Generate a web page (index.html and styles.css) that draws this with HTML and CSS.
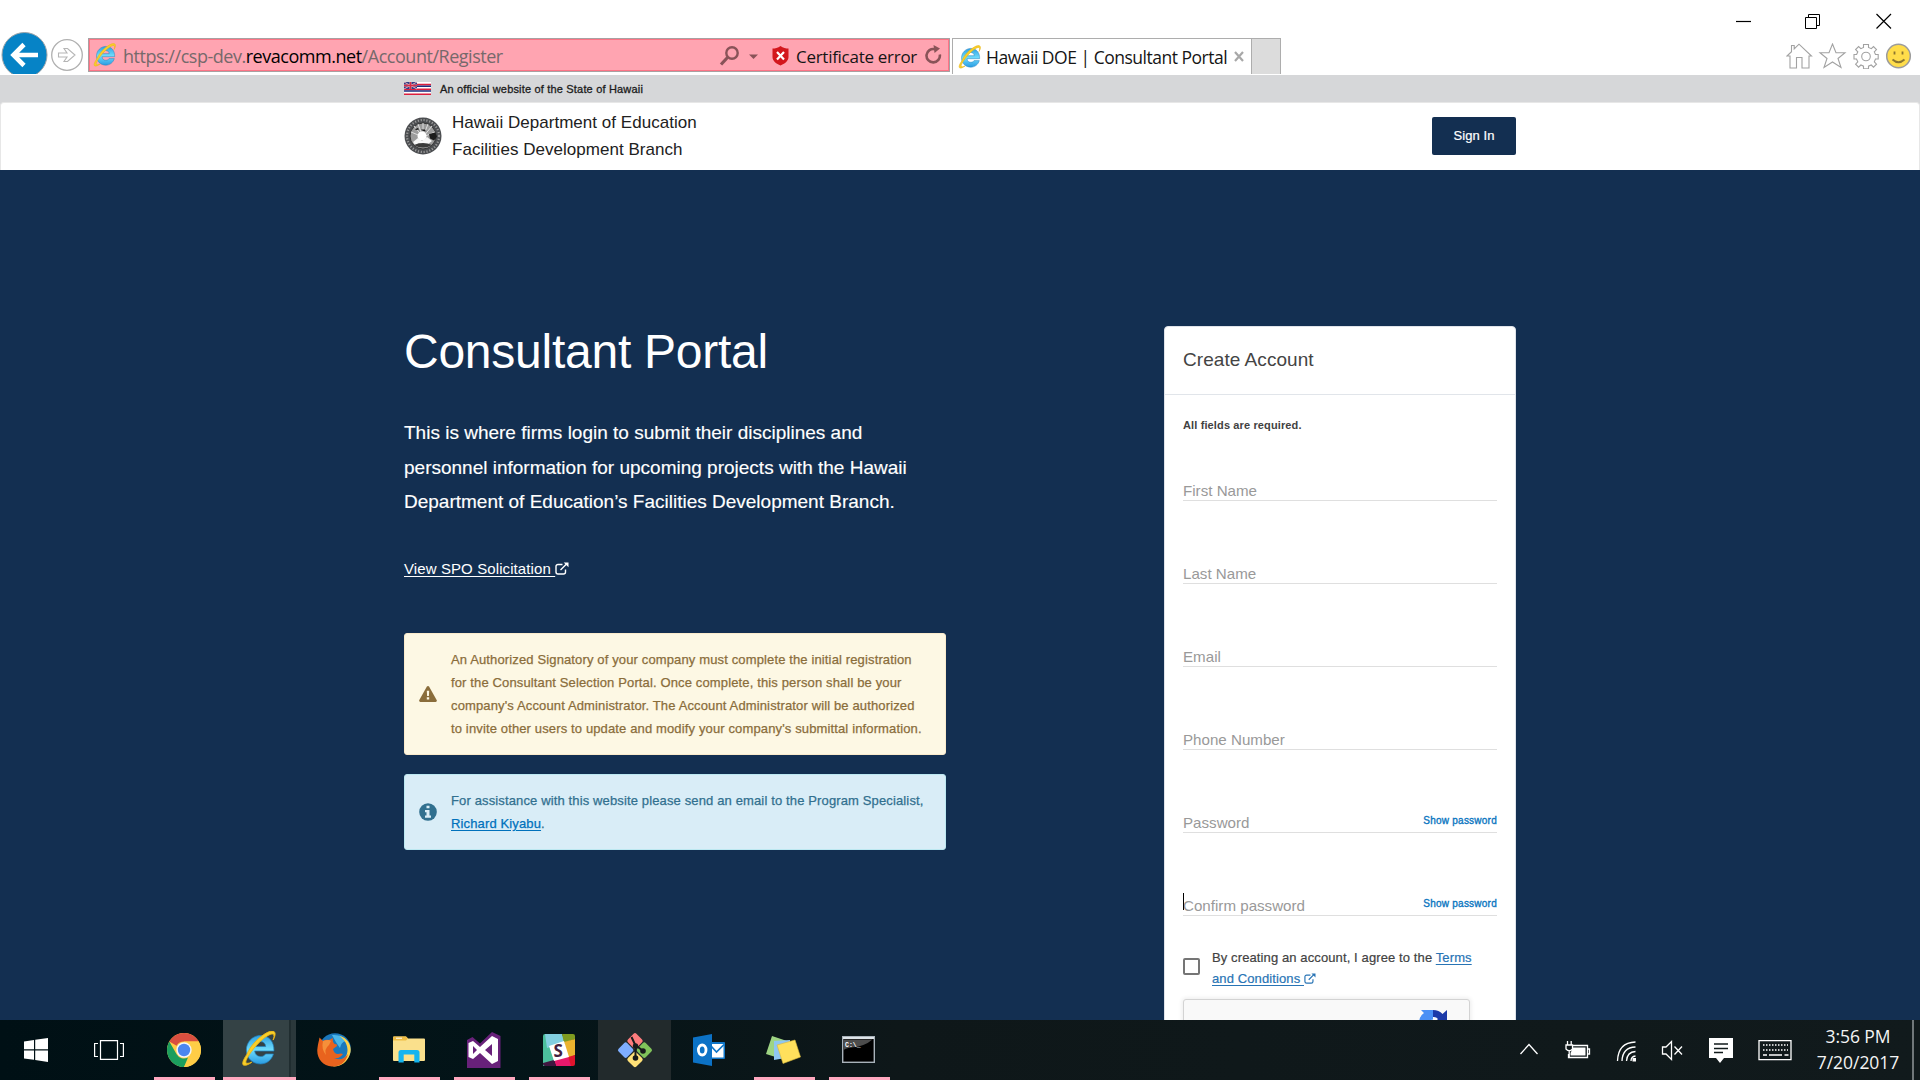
FILE: index.html
```
<!DOCTYPE html>
<html lang="en">
<head>
<meta charset="utf-8">
<title>Hawaii DOE | Consultant Portal</title>
<link rel="stylesheet" href="styles.css">
</head>
<body>
<svg class="defs" width="0" height="0">
  <defs>
    <linearGradient id="ieBlue" x1="0" y1="0" x2="0" y2="1"><stop offset="0" stop-color="#2f9fe0"/><stop offset=".5" stop-color="#6fdcfc"/><stop offset="1" stop-color="#2a9ce2"/></linearGradient>
    <symbol id="ie" viewBox="0 0 34 34">
      <path d="M32 19.5H13.3c.3 3.500 2.800 5.300 5.700 5.300 2.500 0 4-1 4.800-2.500h7.700C29.800 28.200 25 32 19 32 11.200 32 5.200 26.400 5.200 18.500S11.400 4.300 19 4.300c8 0 13.400 5.900 13 15.200zM13.400 15H24c-.3-3-2.300-4.700-5.200-4.700s-5 1.800-5.400 4.700z" fill="url(#ieBlue)" stroke="#2180be" stroke-width=".7"/>
      <path d="M5.500 23C1.500 29 .4 33 3.200 33.300c2 .2 4.600-1 7.300-3-3 1.300-5.200 1.500-5.700.5C4 29 8 22 14.500 14.500S28.600 2 31 3c1.500.7 1.300 3 .2 5.800 2-3.800 2.700-7 .9-8.200C28.800-1.500 21 3.300 13.700 10.600 10 14.300 7.500 18.600 5.500 23z" fill="#f9cf2a" stroke="#e9b618" stroke-width=".9"/>
    </symbol>
    <symbol id="external" viewBox="0 0 14 13">
      <path d="M7.500 2.500H3A2 2 0 0 0 1 4.500V10a2 2 0 0 0 2 2h5.500a2 2 0 0 0 2-2V7.500M5.500 8 11.500 2" fill="none" stroke="currentColor" stroke-width="1.400"/>
      <path d="M8.700.5H13.500V5.300z" fill="currentColor"/>
    </symbol>
  </defs>
</svg>

<header class="browser">
  <svg class="nav-buttons" width="88" height="42" viewBox="0 0 88 42">
    <circle cx="24.500" cy="23" r="22.500" fill="#0683c6" stroke="#9aa3a8"/>
    <path d="M38 23H15M24 12.500 13.500 23 24 33.500" fill="none" stroke="#fff" stroke-width="4.600"/>
    <circle cx="67" cy="23" r="15.300" fill="#fff" stroke="#b0b0b0" stroke-width="1.300"/>
    <path d="M58.500 21H67l-3-4.500h3.500L75 23l-7.500 6.500H64L67 25H58.500z" fill="#fff" stroke="#b5b5b5" stroke-width="1.100"/>
  </svg>
  <div class="address">
    <svg class="addr-ie" width="23" height="24"><use href="#ie"/></svg>
    <span class="url">https://csp-dev.<b>revacomm.net</b>/Account/Register</span>
    <svg width="40" height="24" viewBox="0 0 40 24"><circle cx="13" cy="9" r="5.700" fill="none" stroke="#895358" stroke-width="2.400"/><path d="M8.500 13.500 2 20.500" stroke="#895358" stroke-width="3.200"/><path d="M30 10.500H39L34.500 15z" fill="#895358"/></svg>
    <svg class="shield" width="17" height="20" viewBox="0 0 17 20"><path d="M8.500 0C11 2 14 2.500 16.500 2.500V11c0 4-4 7-8 8.500C4.500 18 .5 15 .5 11V2.500C3 2.500 6 2 8.500 0z" fill="#d3171d"/><path d="M5 6l7 7.500M12 6l-7 7.500" stroke="#fff" stroke-width="2.200"/></svg>
    <span class="cert">Certificate error</span>
    <svg class="reload" width="17" height="20" viewBox="0 0 17 20"><path d="M14.800 9.500A6.700 6.700 0 1 1 10 4.200" fill="none" stroke="#895358" stroke-width="2.600"/><path d="M8.500 0 15 3.500 9.500 8z" fill="#895358"/></svg>
  </div>
  <div class="tab">
    <svg width="23" height="24"><use href="#ie"/></svg>
    <span class="tab-title">Hawaii DOE | Consultant Portal</span>
    <svg class="tab-x" width="10" height="11" viewBox="0 0 10 11"><path d="M1 1l8 9M9 1l-8 9" stroke="#a8a8a8" stroke-width="2.200"/></svg>
  </div>
  <div class="new-tab"></div>
  <div class="window-tools">
    <svg width="156" height="17" viewBox="0 0 156 17" fill="none" stroke="#000"><path d="M0 8.500H15" stroke-width="1.200"/><path d="M69.500 4.500h11v11h-11zM72.500 4V1.500h11v11H81"/><path d="M140.500 1l14.500 14.500M155 1l-14.500 14.500" stroke-width="1.200"/></svg>
    <svg width="126" height="26" viewBox="0 0 126 26" fill="none" stroke="#a2a2a2" stroke-width="1.100">
      <path d="M1 13 5.500 8.700V2.500h2.700V6L13 1.200 25.500 13H23V25H16V14.500H10.500V25H4V13z"/>
      <path d="M46.500 1 50 9.700h9l-7 5.800 3 9-8.500-5.500L38 24.500l3-9-7-5.800h9z"/>
      <path d="M77.500 1.500h5v3l2.800 1.200 2.200-2.200 3 3-2.200 2.400 1.200 2.600h2.700v4.500h-2.700l-1.200 2.900 2.200 2.300-3 3-2.300-2.200-2.700 1.200v2.500h-5v-2.500l-2.600-1.200-2.300 2.200-3-3 2.200-2.300L70.500 16H68v-4.500h2.600l1.200-2.700-2.200-2.300 3-3 2.300 2.200 2.600-1.200z"/><circle cx="80" cy="13.500" r="4.300"/>
      <circle cx="112.500" cy="13" r="11.800" fill="#ffdd4a" stroke="#9c9c9c" stroke-width="1.500"/><path d="M108.500 8.500v3M116.500 8.500v3" stroke="#8b7630" stroke-width="1.800"/><path d="M106.500 16.500q6 5.500 12 0" stroke="#8b7630" stroke-width="1.800"/>
    </svg>
  </div>
</header>

<div class="gov-bar"><div class="wrap gov-inner">
  <svg width="27" height="13" viewBox="0 0 27 13"><path fill="#fff" d="M0 0h27v13H0z"/><path d="M0 2.600h27M0 7.400h27M0 12.200h27" stroke="#dc1f3e" stroke-width="1.600"/><path d="M0 4.200h27M0 9h27" stroke="#1b2f80" stroke-width="1.600"/><path fill="#2b3f88" d="M0 0h13v7H0z"/><path d="M0 0l13 7M13 0 0 7" stroke="#e9b0ba" stroke-width="1"/><path d="M6.500 0v7M0 3.500h13" stroke="#e8a5b0" stroke-width="2"/><path d="M6.500 0v7M0 3.500h13" stroke="#d52d48" stroke-width="1.300"/></svg>
  <span>An official website of the State of Hawaii</span>
</div></div>

<div class="site-header"><div class="wrap header-inner">
  <svg class="seal" width="38" height="38" viewBox="0 0 38 38">
    <circle cx="19" cy="19" r="18.500" fill="#4b4d50"/><circle cx="19" cy="19" r="16" fill="none" stroke="#9a9a9a" stroke-width="2.200" stroke-dasharray="1.200 1.700"/><circle cx="19" cy="19" r="13" fill="#9c9c9c" stroke="#333"/>
    <path d="M19 20V6M19 20 10 9M19 20 28 9M19 20 7 15M19 20 31 15M19 20 14 7M19 20 24 7" stroke="#ddd" stroke-width="1"/>
    <path d="M11 12l3-1 1 1.500-3 .500zM17 12.500h4l1 2-3-.500zM25 17l6-1.500 2 4-3 4-4-2z" fill="#1c1c1c"/>
    <circle cx="18" cy="19" r="4.500" fill="#fff"/><path d="M9 25l5-4 4 3 5-4 5 4-5 4-8-2-4 2z" fill="#f7f7f7"/><path d="M10 28q9-4 18 0-9 5-18 0z" fill="#3a3a3a"/>
  </svg>
  <div class="org"><div>Hawaii Department of Education</div><div>Facilities Development Branch</div></div>
  <a class="sign-in">Sign In</a>
</div></div>

<main class="hero"><div class="wrap hero-inner">
  <section class="intro">
    <h1>Consultant Portal</h1>
    <p class="lead">This is where firms login to submit their disciplines and<br>personnel information for upcoming projects with the Hawaii<br>Department of Education’s Facilities Development Branch.</p>
    <a class="spo"><u>View SPO Solicitation </u><svg width="14" height="13"><use href="#external"/></svg></a>
    <div class="alert warning">
      <svg width="18" height="16" viewBox="0 0 18 16"><path d="M9 0q.8 0 1.200.7l7.600 13.500q.3 1.500-1.100 1.700H1.300Q-.1 15.700.2 14.200L7.800.7Q8.200 0 9 0z" fill="#8a6d3b"/><path d="M7.800 4.800h2.400l-.3 5.200H8.100zM7.800 11.300h2.400v2.300H7.800z" fill="#fdf8e4"/></svg>
      <p>An Authorized Signatory of your company must complete the initial registration<br>for the Consultant Selection Portal. Once complete, this person shall be your<br>company's Account Administrator. The Account Administrator will be authorized<br>to invite other users to update and modify your company's submittal information.</p>
    </div>
    <div class="alert info">
      <svg width="18" height="18" viewBox="0 0 18 18"><circle cx="9" cy="9" r="8.800" fill="#31708f"/><path d="M7.500 2.700h3v2.500h-3zM6 7h4.500v5.500H12v2.200H6v-2.200h1.500V9.200H6z" fill="#d9edf7"/></svg>
      <p>For assistance with this website please send an email to the Program Specialist,<br><a>Richard Kiyabu</a>.</p>
    </div>
  </section>

  <section class="card">
    <h2>Create Account</h2>
    <form class="form">
      <p class="required">All fields are required.</p>
      <div class="field"><label>First Name</label></div>
      <div class="field"><label>Last Name</label></div>
      <div class="field"><label>Email</label></div>
      <div class="field"><label>Phone Number</label></div>
      <div class="field"><label>Password</label><a>Show password</a></div>
      <div class="field focused"><label>Confirm password</label><a>Show password</a></div>
      <div class="terms"><span class="checkbox"></span><p>By creating an account, I agree to the <a>Terms<br>and Conditions </a><svg width="12" height="11"><use href="#external"/></svg></p></div>
      <div class="captcha"><svg width="32" height="32" viewBox="0 0 32 32"><path d="M16 2v9.500q-4.500.5-5 4.500H2Q2 8 7 5L4 2z" fill="#4a90f5"/><path d="M16 2q6 0 9.500 4L30 2v13H17l4-4q-2-2.500-5-2z" fill="#1c3aa9"/><path d="M2 16h8l-2 2q3 7 9 4l6 4Q10 35 4 23z" fill="#ababab"/></svg></div>
    </form>
  </section>
</div></main>

<footer class="taskbar">
  <div class="task start"><svg width="24" height="24" viewBox="0 0 24 24" fill="#fff"><path d="M0 3.400 10 2v9.300H0zM11.200 1.800 24 0v11.300H11.200zM0 12.500h10v9.300L0 20.500zM11.200 12.500H24V24l-12.800-1.900z"/></svg></div>
  <div class="task"><svg width="30" height="20" viewBox="0 0 30 20" fill="none" stroke="#fff" stroke-width="1.200"><path d="M6.500.6h17v18.800h-17zM4 3.500H.6v13H4M26 3.500h3.400v13H26"/></svg></div>
  <div class="task open"><svg width="34" height="34" viewBox="0 0 34 34"><circle cx="17" cy="17" r="17" fill="#ffcd46"/><path d="M2.300 8.500A17 17 0 0 1 31.700 8.500H17a8.500 8.500 0 0 0-7.400 4.200z" fill="#d94f40"/><path d="M2.300 8.500 9.600 21.200A8.500 8.500 0 0 0 21 24.500L17 34A17 17 0 0 1 2.300 8.500z" fill="#1b9e5d"/><path d="M31.700 8.500H17v1.500l7.400 11.200L17 34A17 17 0 0 0 31.700 8.500z" fill="#ffcd46"/><circle cx="17" cy="17" r="7.700" fill="#f5f5f5"/><circle cx="17" cy="17" r="6.200" fill="#4a86f0"/></svg></div>
  <div class="task open active"><svg width="35" height="35"><use href="#ie"/></svg></div>
  <div class="task"><svg width="34" height="34" viewBox="0 0 34 34"><circle cx="18" cy="16" r="15.800" fill="#1a78bd"/><path d="M15 2q10-1 14 6-5 1-6 7-4-5-8-13z" fill="#4bb6e8"/><path d="M22 2.500C33 6 35 15 33 21c-3 9-10 13-17 12.500l12-9c4-5 4-15-6-22z" fill="#ffd24a"/><path d="M2.500 4.500 6 8q3-2 6-1l4-2q-1 4 1.500 6 3 0 2.500 2l-4 3q1 5 5 5 3-1 5 0-3 5-9 4 8 4 14-4C29 30 22 34 15 33.500 5 33-1 24 .5 15 1 10 2 8 2.500 4.500z" fill="#e9631e"/><path d="M6 8q6-2 8 0l-2 4q-5 4-3 10-5-6-3-14z" fill="#f6903a"/></svg></div>
  <div class="task open"><svg width="32" height="27" viewBox="0 0 32 27"><path d="M0 1.500Q0 .5 1 .5H13l2 2H31q1 0 1 1V24q0 1-1 1H1q-1 0-1-1z" fill="#fae08c"/><path d="M0 1.500Q0 .5 1 .5H13l2 2-2 2H0z" fill="#eebd45"/><path d="M3 1.700h6v1H3z" fill="#fff"/><path d="M5.500 26.500v-10q0-2.500 2.500-2.500h16q2.500 0 2.500 2.500v10h-5.200V18.500H10.700v8z" fill="#14b4f0"/></svg></div>
  <div class="task open"><svg width="36" height="36" viewBox="0 0 36 36"><path d="M1 8 6.500 5 14 11.500 26 0l8.500 4V36H1z" fill="#68217a"/><path d="M2.500 11 7 9l7 6L26 4l6 3v22l-6 3-12-11-7 6-4.500-2zM7 14v8l4-4zM26 12l-7 6 7 6z" fill="#fff" fill-rule="evenodd"/></svg></div>
  <div class="task open"><svg width="32" height="32" viewBox="0 0 32 32"><path fill="#4bbf9c" d="M2 0h9v32H0V2q0-2 2-2z"/><path fill="#82cfe0" d="M2 0h17l3 8-18 6z"/><path fill="#7f9b20" d="M19 0h11q2 0 2 2v3l-11 4z"/><path fill="#ecb32e" d="M21 8l11-3v16l-7 4z"/><path fill="#e0142c" d="M25 23l7-2v9q0 2-2 2h-4z"/><path fill="#e8186c" d="M11 26l14-4 3 10H13z"/><path fill="#401640" d="M0 29l11-3 2 6H2q-2 0-2-2z"/><path fill="#fff" d="M6 12l15-5 5 16-15 4z"/><text class="slack-s" x="10.500" y="22.500">S</text></svg></div>
  <div class="task hover"><svg width="36" height="36" viewBox="0 0 36 36"><g transform="rotate(45 18 18)"><rect x="5.500" y="5.500" width="12" height="12" rx="2" fill="#fd7c7d"/><rect x="18.700" y="5.500" width="12" height="12" rx="2" fill="#80c35a"/><rect x="5.500" y="18.700" width="12" height="12" rx="2" fill="#7faeff"/><rect x="18.700" y="18.700" width="12" height="12" rx="2" fill="#ffe178"/></g><path d="M14.500 5l4 8.500v13M18.500 13l7.500 6" stroke="#171b1b" stroke-width="2" fill="none"/><g fill="#171b1b"><circle cx="18.500" cy="14" r="2.700"/><circle cx="18.500" cy="26" r="2.800"/><circle cx="26" cy="19" r="2.800"/></g></svg></div>
  <div class="task"><svg width="32" height="32" viewBox="0 0 32 32"><path d="M18 8h13q1 0 1 1v15q0 1-1 1H18z" fill="#1076c8"/><path d="M18 10h12.500v13.500H18z" fill="#fff"/><path d="M18 12l5.500 6 7.500-7.500" fill="none" stroke="#1076c8" stroke-width="1.700"/><path d="M0 3.500 19 0v32L0 28.500z" fill="#0c72c6"/><ellipse cx="9.200" cy="16" rx="3.800" ry="5" fill="none" stroke="#fff" stroke-width="2.800"/></svg></div>
  <div class="task open"><svg width="35" height="28" viewBox="0 0 35 28"><path d="M6 0 21 5 16 23 0 18z" fill="#9ed483"/><path d="M8 5l16-1 1 17-17 3z" fill="#8fc6f2"/><path d="M11 9 29 4l5.500 17L17 27.500z" fill="#ffe05c" stroke="#d8b83c" stroke-width=".6"/></svg></div>
  <div class="task open"><svg width="33" height="27" viewBox="0 0 33 27"><rect x=".7" y=".7" width="31.600" height="25.600" fill="#000" stroke="#a9b2ba" stroke-width="1.400"/><path d="M1 1h31v2H1z" fill="#dde3e8"/><path d="M1.500 3.500h29q-8 7-21 8-7 1-8 3z" fill="#4c4c4c"/><text class="cmd-text" x="3" y="10.500">C:\_</text></svg></div>
  <div class="tray">
    <svg width="272" height="28" viewBox="0 0 272 28" fill="none" stroke="#fff" stroke-width="1.300">
      <path d="M.5 18 9 8.500 17.500 18"/>
      <path d="M53 9.500H67.500V21.500H48.500V18M67.500 13h2v5h-2"/><path d="M53 11.500h12.500v8H50.500V17z" fill="#fff" stroke="none"/><path d="M46 9h6.500v4q-3.200 3.500-6.500 0zM47.500 5v4M51.200 5v4M49.200 15v6"/>
      <path d="M97.500 25Q98 6.500 115.500 6M102 25q.5-13.500 13.500-14M106.500 25q.5-9 9-9.500"/><path d="M111 25q0-4.500 4.500-5" /><path d="M112.500 22h3.500v3.500h-3.500z" fill="#fff" stroke="none"/>
      <path d="M142.500 11h3.500l5.500-5.500v18L146 18h-3.500zM154.500 10.500l7.500 8M162 10.500l-7.500 8"/>
      <path d="M189 2h24v20h-9l-4 5-4-5h-7z" fill="#fff" stroke="none"/><path d="M194 8h14M194 12.500h14M194 16.500h9" stroke="#101a1b" stroke-width="1.500"/>
      <path d="M239 4.700h32v19h-32z"/><path d="M243 9h25M243 14h25" stroke-dasharray="1.500 1.500" stroke-width="1.600"/><path d="M243 19h4M249 19h13M264.500 19h4"/>
    </svg>
    <div class="clock"><div class="time">3:56 PM</div><div>7/20/2017</div></div>
    <i class="show-desktop"></i>
  </div>
</footer>
</body>
</html>
```
FILE: styles.css
```
* { box-sizing: border-box; }
body, h1, h2, p { margin: 0; font-weight: 400; }
body {
  width: 1920px; height: 1080px; overflow: hidden;
  display: flex; flex-direction: column;
  font-family: "Liberation Sans", Arial, sans-serif;
  background: #132f51;
}
svg { display: block; flex: none; }
.defs { position: absolute; }

/* Browser window frame */
.browser {
  flex: none; height: 75px; background: #fff; display: flex; align-items: flex-start;
  font-family: "Open Sans", sans-serif; font-size: 18px; color: #151515;
}
.nav-buttons { margin-top: 32px; }
.address {
  width: 862px; height: 34px; margin: 38px 2px 0 0; padding-top: 2px; background: #ffa4b1;
  border: 1px solid #a9a0a2; box-shadow: inset 0 0 0 1px #fd7486;
  display: flex; align-items: center;
}
.addr-ie { margin: 0 7px 2px 4px; }
.url { width: 596px; font-size: 18px; letter-spacing: -.47px; line-height: 30px; color: #76696b; white-space: nowrap; }
.url b { font-weight: 400; color: #000; }
.shield { margin: 0 7px 0 13px; }
.cert { width: 122px; font-size: 17px; letter-spacing: -.28px; white-space: nowrap; }
.reload { margin: 0 0 3px 7px; }
.tab {
  width: 300px; height: 36px; margin-top: 38px; padding-left: 5px;
  border: 1px solid #adadad; border-bottom: 0; display: flex; align-items: center;
}
.tab-title { width: 244px; margin-left: 5px; font-size: 17.500px; letter-spacing: -.49px; white-space: nowrap; }
.tab-x { margin-left: 4px; }
.new-tab { width: 29px; height: 36px; margin-top: 38px; background: #dcdcdc; border: 1px solid #adadad; border-left: 0; border-bottom: 0; }
.window-tools { margin: 13px 8px 0 auto; display: flex; flex-direction: column; align-items: flex-end; gap: 13px; }
.window-tools svg:first-child { margin-right: 20px; }

/* Site header */
.wrap { width: 1112px; margin: 0 auto; }
.gov-bar { flex: none; height: 27px; background: #d6d7d9; }
.gov-inner { height: 27px; display: flex; align-items: center; gap: 9px; font-size: 11px; letter-spacing: .18px; color: #1c1c1c; -webkit-text-stroke: .3px #1c1c1c; }
.site-header { flex: none; height: 68px; background: #fff; border: 1px solid #e7e7e7; border-bottom: 0; border-radius: 4px 4px 0 0; box-shadow: 0 -4px 0 #d6d7d9; }
.header-inner { display: flex; align-items: flex-start; padding-top: 6px; }
.seal { margin-top: 8px; }
.org { margin-left: 10px; font-size: 17px; letter-spacing: .03px; line-height: 27px; color: #212121; }
.sign-in { margin: 8px 0 0 auto; width: 84px; height: 38px; border-radius: 2px; background: #132f51; color: #fff; font-size: 13px; line-height: 37px; letter-spacing: .1px; text-align: center; -webkit-text-stroke: .2px #fff; }

/* Hero */
.hero { height: 850px; flex: none; overflow: hidden; }
.hero-inner { display: flex; justify-content: space-between; align-items: flex-start; }
.intro { width: 542px; padding-top: 153px; color: #fff; }
h1 { font-size: 48px; letter-spacing: -.25px; line-height: 58px; }
.lead { margin-top: 35px; font-size: 19px; line-height: 34.500px; white-space: nowrap; -webkit-text-stroke: .15px #fff; }
.spo { margin-top: 39px; display: flex; align-items: center; font-size: 15px; letter-spacing: .1px; line-height: 20px; }
.spo u { white-space: pre; text-underline-offset: 2px; text-decoration-thickness: 1px; }
.alert { width: 542px; border: 1px solid; border-radius: 3px; padding: 14px; display: flex; align-items: center; gap: 14px; font-size: 13px; letter-spacing: .135px; line-height: 23px; }
.alert p { white-space: nowrap; -webkit-text-stroke: .25px currentColor; }
.warning { margin-top: 54px; background: #fdf8e4; border-color: #faebcc; color: #8a6d3b; }
.info { margin-top: 19px; background: #d9edf7; border-color: #bce8f1; color: #31708f; }
.info a { color: #0071bc; text-decoration: underline; text-underline-offset: 2px; }

/* Registration card */
.card { width: 352px; height: 800px; margin-top: 156px; background: #fff; border: 1px solid #dfe3e9; border-radius: 4px; color: #424242; }
h2 { height: 68px; padding: 0 18px; border-bottom: 1px solid #e1e5ea; font-size: 19px; letter-spacing: .05px; line-height: 66px; color: #444; }
.form { padding: 20px 18px 0; }
.required { font-size: 11px; font-weight: 700; letter-spacing: .13px; line-height: 20px; }
.field { height: 66px; margin-bottom: 17.100px; border-bottom: 1px solid #dfdfdf; display: flex; align-items: flex-end; justify-content: space-between; }
.field label { font-size: 15.150px; line-height: 19px; color: #999; }
.field a { font-size: 10px; letter-spacing: .24px; line-height: 20px; padding-bottom: 1px; color: #0c76bf; -webkit-text-stroke: .35px #0c76bf; }
.focused label { position: relative; }
.focused label::before { content: ""; position: absolute; left: 0; top: -3px; width: 1px; height: 17px; background: #000; }
.terms { margin-top: 31px; display: flex; gap: 12px; font-size: 13px; letter-spacing: .11px; line-height: 21px; }
.terms p { white-space: nowrap; -webkit-text-stroke: .2px currentColor; }
.terms a { white-space: pre; color: #2874b5; text-decoration: underline; text-underline-offset: 2px; }
.terms svg { display: inline-block; vertical-align: -1px; color: #2874b5; }
.checkbox { width: 17px; height: 17px; margin-top: 11px; border: 2px solid #757575; border-radius: 2px; }
.captcha { width: 287px; height: 78px; margin-top: 10px; padding: 8px 20px; background: #f9f9f9; border: 1px solid #d3d3d3; border-radius: 3px; box-shadow: 0 0 4px 1px rgba(0,0,0,.08); display: flex; justify-content: flex-end; }

/* Desktop taskbar */
.taskbar { flex: none; height: 60px; background: linear-gradient(90deg, #001015 0, #031418 500px, #0e1719 900px, #111a1c); display: flex; }
.task { width: 75px; height: 60px; padding: 0 7px 1px; display: flex; align-items: center; justify-content: center; }
.start { width: 71px; }
.open { background: linear-gradient(#ffa8bf, #ffa8bf) 8px bottom / 61px 3px no-repeat; }
.active { background: linear-gradient(#ffa8bf, #ffa8bf) 0 57px / 73px 3px no-repeat, linear-gradient(90deg, #344245 66px, #202d30 66px 68px, #2b383b 68px); width: 73px; margin: 0 0 0 2px; padding-right: 9px; padding-bottom: 3px; }
.hover { background: #222a2c; width: 73px; margin: 0 0 0 2px; }
.slack-s { font: 700 17px "Open Sans", sans-serif; fill: #43213f; }
.cmd-text { font: 700 6.500px "Liberation Mono", monospace; fill: #fff; }
.tray { margin-left: auto; display: flex; align-items: center; color: #f4f4f4; font-family: "Open Sans", sans-serif; }
.tray > svg { margin-right: 24px; }
.clock { width: 84px; text-align: center; font-size: 17.500px; letter-spacing: -.05px; line-height: 26px; padding-bottom: 2px; }
.show-desktop { width: 2px; height: 60px; margin: 0 6px 0 12px; background: #70777a; }
```
